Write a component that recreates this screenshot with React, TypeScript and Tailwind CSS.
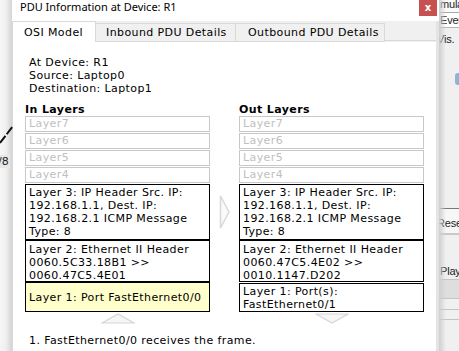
import React from "react";

const body = "font-['DejaVu_Sans',sans-serif] text-[11px] leading-[13px] tracking-[0.4px] text-black";

const GrayBox = ({ label }: { label: string }) => (
  <div className="mb-px h-[16px] border border-[#c8c8c8] pl-[3px] leading-[14px] text-[#c0c0c0]">{label}</div>
);

const Box = ({ lines, className }: { lines: string[]; className: string }) => (
  <div className={"border border-black pl-[3px] whitespace-nowrap " + className}>
    {lines.map((l) => (
      <div key={l}>{l}</div>
    ))}
  </div>
);

const UpArrow = () => (
  <svg width="34" height="11" viewBox="0 0 34 11" className="mx-auto mt-px">
    <path d="M1 10 L17 1 L33 10 Z" fill="#f6f6f6" stroke="#d6d6d6" strokeWidth="1.2" />
  </svg>
);

const DownArrow = () => (
  <svg width="34" height="11" viewBox="0 0 34 11" className="mx-auto mt-px">
    <path d="M1 1 L17 10 L33 1 Z" fill="#f6f6f6" stroke="#d6d6d6" strokeWidth="1.2" />
  </svg>
);

const LeftStrip = () => (
  <div className="relative w-[12px] shrink-0 bg-linear-to-r from-[#f6f6f6] via-[#efefef] to-[#d4d4d4]">
    {/* cable from the topology canvas behind */}
    <svg width="13" height="20" viewBox="0 0 13 20" className="absolute left-0 top-[125px]">
      <path d="M0 18 L13 1" stroke="#111" strokeWidth="2" strokeDasharray="9 2" />
    </svg>
    <div className="absolute left-[-3px] top-[155px] bg-[#e6e6e6] px-px font-['DejaVu_Sans',sans-serif] text-[11px] leading-[13px] text-[#222]">
      /8
    </div>
  </div>
);

const RightStrip = () => (
  <div className="relative flex w-[20px] shrink-0 flex-col overflow-hidden bg-[#f0f0f0] font-['Liberation_Sans',sans-serif] text-[11px] leading-[13px] tracking-[-0.2px] text-[#222] whitespace-nowrap">
    <div className="h-[12px] overflow-hidden bg-[#fafafa] pl-px leading-[9px]">mula</div>
    <div className="h-px bg-[#a8a8a8]" />
    <div className="h-[15px] border-b border-[#b4b4b4] bg-white pl-px leading-[15px]">Ever</div>
    <div className="mt-[5px] -ml-[2px]">Vis.</div>
    <div className="ml-[16px] mt-[27px] h-[12px] w-[8px] rounded-[3px] bg-[#8fb3d0]" />
    <div className="mt-[123px] h-px bg-[#7a7a7a]" />
    <div className="h-[26px] border-b-2 border-[#c8c8c8] bg-[#f7f7f7] -ml-[2px] pt-[8px] leading-[13px]">Rese</div>
    <div className="mt-[30px] h-[14px] pl-px leading-[13px]">Play</div>
    <div className="h-[20px] border-y border-[#c4c4c4] bg-[#dedede]" />
    <div className="mt-[10px] h-px bg-[#c4c4c4]" />
    <div className="mt-[9px] h-px bg-[#c4c4c4]" />
    <div className="pointer-events-none absolute inset-y-0 left-0 w-[7px] bg-linear-to-r from-[#cfcfcf] to-transparent" />
  </div>
);

export default function App() {
  return (
    <div className="flex h-[351px] w-[459px] overflow-hidden bg-[#f0f0f0]">
      <LeftStrip />

      <div className="flex w-[427px] shrink-0 flex-col bg-[#f0f0f0]">
        {/* Title bar */}
        <div className="flex h-[21px] items-start bg-white">
          <div className="flex-1 pl-[8px] font-['Noto_Sans',sans-serif] text-[11px] leading-[13px] text-black">
            PDU Information at Device: R1
          </div>
          <div className="mr-[2px] flex h-[16px] w-[18px] items-center justify-center bg-[#c75050] font-['DejaVu_Sans',sans-serif] text-[10px] font-bold leading-none text-white">
            x
          </div>
        </div>

        <div className="flex flex-1">
          <div className={"flex w-[424px] flex-col " + body}>
            {/* Tabs */}
            <div className="flex h-[21px] items-end">
              <div className="h-[21px] w-[84px] border-x border-t border-[#d9d9d9] bg-white pl-[11px] pt-[4px]">
                OSI Model
              </div>
              <div className="h-[19px] w-[140px] border-y border-r border-[#d9d9d9] pl-[10px] pt-[2px]">
                Inbound PDU Details
              </div>
              <div className="h-[19px] w-[149px] border-y border-r border-[#d9d9d9] pl-[12px] pt-[2px]">
                Outbound PDU Details
              </div>
              <div className="h-px flex-1 bg-[#d9d9d9] mb-px" />
            </div>

            {/* Panel */}
            <div className="flex-1 border-l border-[#d9d9d9] bg-white pl-[12px] pt-[14px]">
              <div className="pl-[4px]">
                <div>At Device: R1</div>
                <div>Source: Laptop0</div>
                <div>Destination: Laptop1</div>
              </div>

              <div className="mt-[8px] flex">
                {/* In layers */}
                <div className="w-[185px]">
                  <div className="h-[13px] font-bold">In Layers</div>
                  <GrayBox label="Layer7" />
                  <GrayBox label="Layer6" />
                  <GrayBox label="Layer5" />
                  <GrayBox label="Layer4" />
                  <Box
                    className="h-[56px] pt-px"
                    lines={["Layer 3: IP Header Src. IP:", "192.168.1.1, Dest. IP:", "192.168.2.1 ICMP Message", "Type: 8"]}
                  />
                  <Box
                    className="h-[42px] pt-[2px]"
                    lines={["Layer 2: Ethernet II Header", "0060.5C33.18B1 >>", "0060.47C5.4E01"]}
                  />
                  <Box className="h-[30px] bg-[#ffffcc] pt-[8px]" lines={["Layer 1: Port FastEthernet0/0"]} />
                  <UpArrow />
                </div>

                <div className="w-[29px]">
                  <svg width="11" height="34" viewBox="0 0 11 34" className="ml-[9px] mt-[92px]">
                    <path d="M1.5 1 L10 17 L1.5 33 Z" fill="#fafafa" stroke="#d6d6d6" strokeWidth="1.4" />
                  </svg>
                </div>

                {/* Out layers */}
                <div className="w-[185px]">
                  <div className="h-[13px] font-bold">Out Layers</div>
                  <GrayBox label="Layer7" />
                  <GrayBox label="Layer6" />
                  <GrayBox label="Layer5" />
                  <GrayBox label="Layer4" />
                  <Box
                    className="h-[56px] pt-px"
                    lines={["Layer 3: IP Header Src. IP:", "192.168.1.1, Dest. IP:", "192.168.2.1 ICMP Message", "Type: 8"]}
                  />
                  <Box
                    className="h-[42px] pt-[2px]"
                    lines={["Layer 2: Ethernet II Header", "0060.47C5.4E02 >>", "0010.1147.D202"]}
                  />
                  <Box className="mt-px h-[29px] pt-px" lines={["Layer 1: Port(s):", "FastEthernet0/1"]} />
                  <DownArrow />
                </div>
              </div>

              <div className="mt-[10px] pl-[4px]">1. FastEthernet0/0 receives the frame.</div>
            </div>
          </div>
          <div className="w-[3px] bg-[#e4e4e4]" />
        </div>
      </div>

      <RightStrip />
    </div>
  );
}
